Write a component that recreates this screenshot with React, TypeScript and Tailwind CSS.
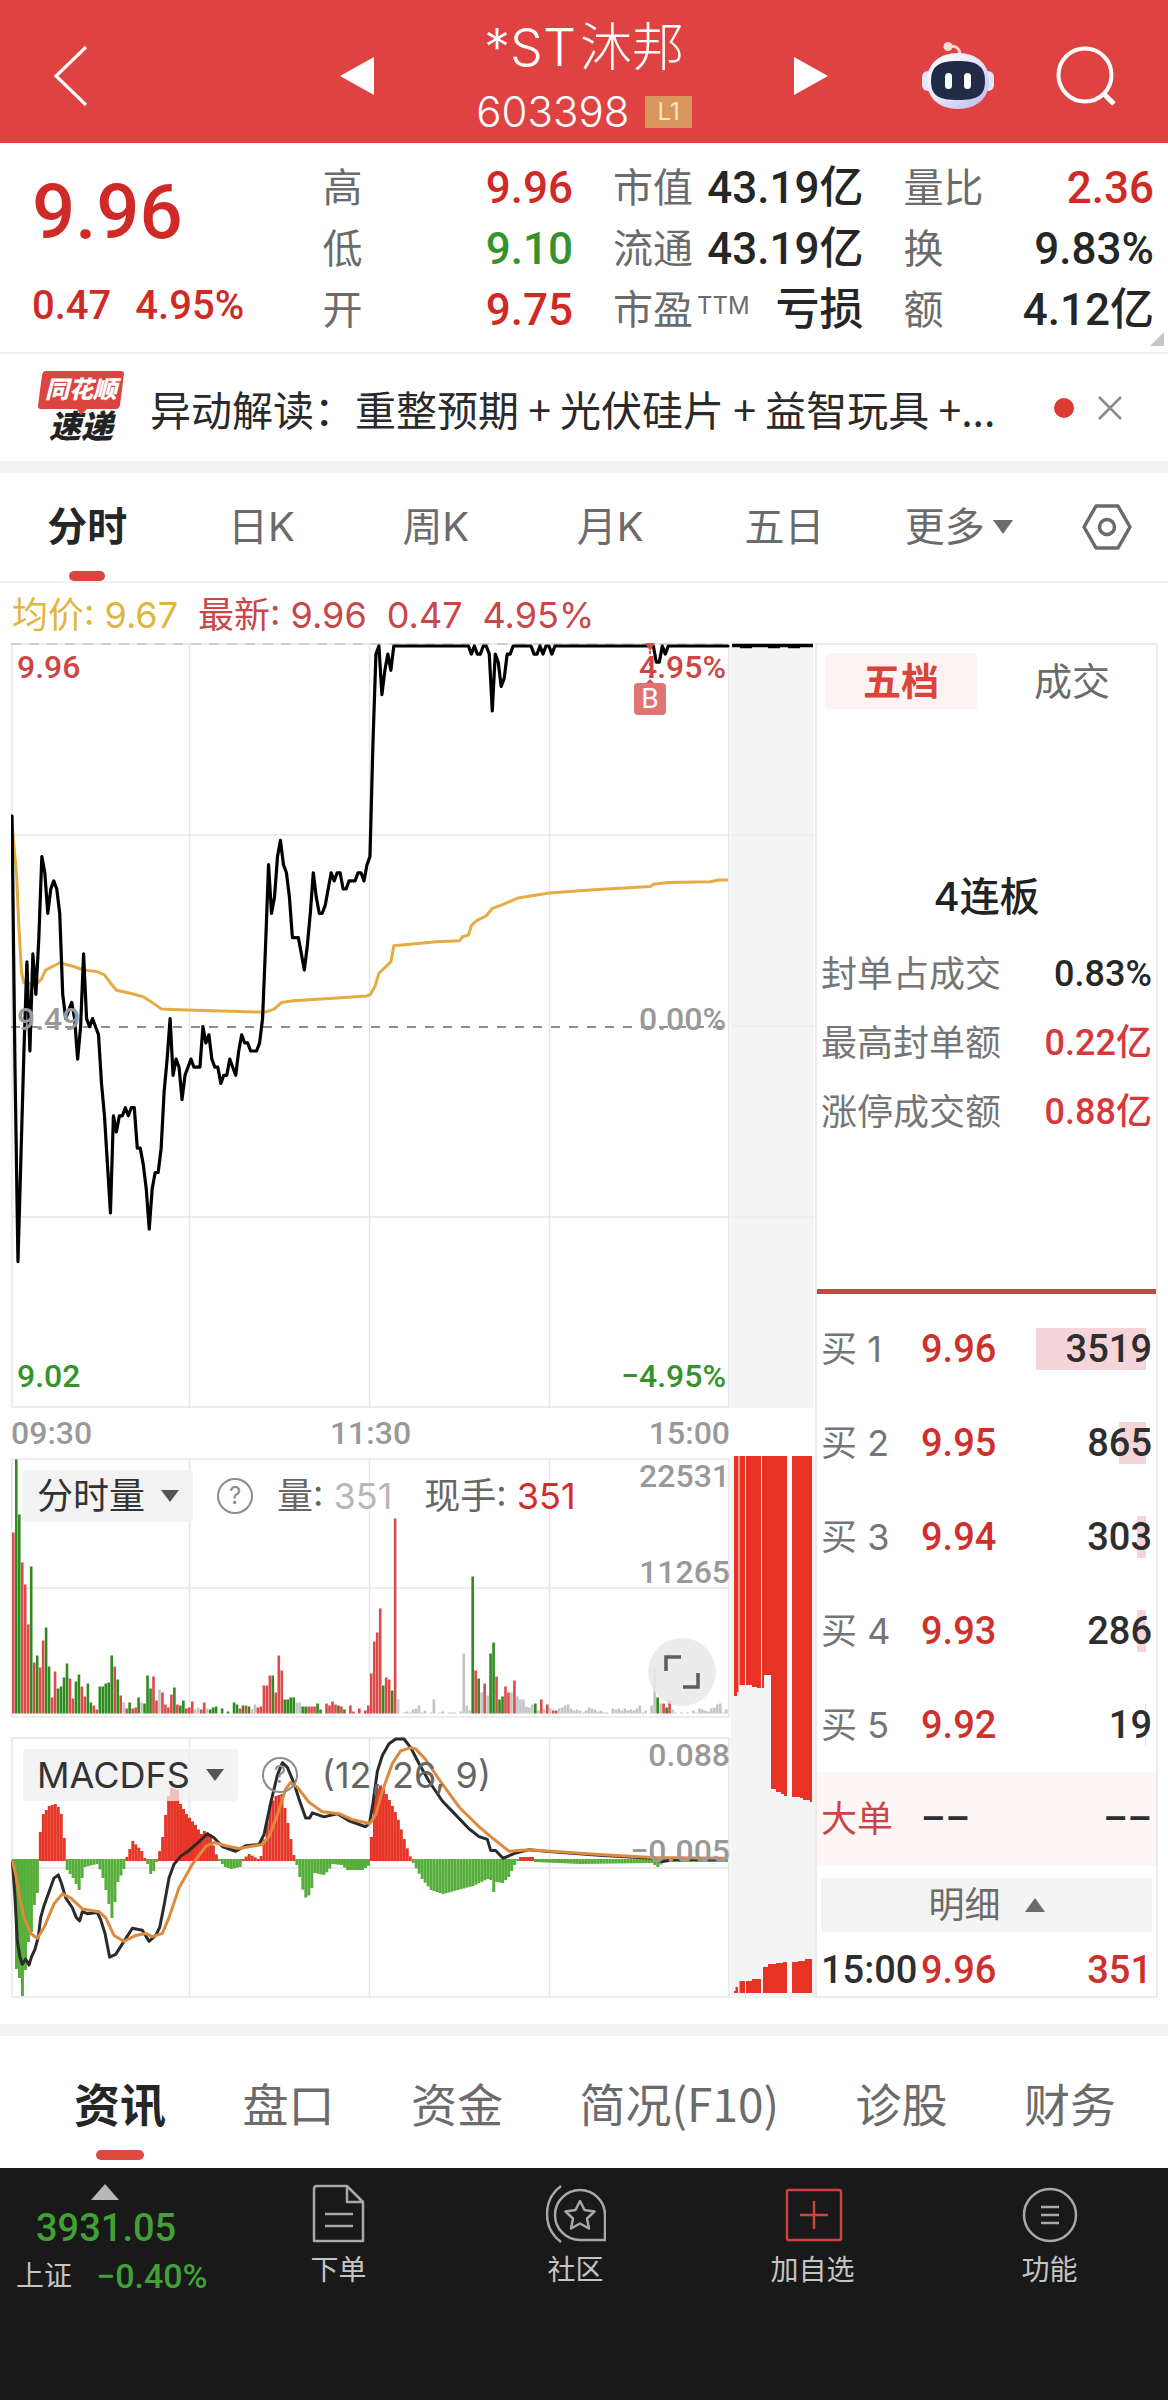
import type { ReactNode } from "react";

/* Mobile stock detail page: quote header, intraday chart with volume and MACD
   panes, order book on the right, and the dark trading bar at the bottom. */

const NUM = "font-[Roboto,'Noto_Sans_CJK_SC',sans-serif] font-medium";
const RED = "text-[#d02a26]";
const GREEN = "text-[#36922a]";
const INK = "text-[#262626]";

type Stat = { label: string; sup?: string; value: string; tone: string };

const STATS: Stat[][] = [
  [
    { label: "高", value: "9.96", tone: RED },
    { label: "低", value: "9.10", tone: GREEN },
    { label: "开", value: "9.75", tone: RED },
  ],
  [
    { label: "市值", value: "43.19亿", tone: INK },
    { label: "流通", value: "43.19亿", tone: INK },
    { label: "市盈", sup: "TTM", value: "亏损", tone: INK },
  ],
  [
    { label: "量比", value: "2.36", tone: RED },
    { label: "换", value: "9.83%", tone: INK },
    { label: "额", value: "4.12亿", tone: INK },
  ],
];

const PERIODS = ["分时", "日K", "周K", "月K", "五日"];
const SECTIONS = ["资讯", "盘口", "资金", "简况(F10)", "诊股", "财务"];

const BIDS = [
  { level: 1, price: "9.96", volume: 3519 },
  { level: 2, price: "9.95", volume: 865 },
  { level: 3, price: "9.94", volume: 303 },
  { level: 4, price: "9.93", volume: 286 },
  { level: 5, price: "9.92", volume: 19 },
];

const SEAL = [
  { label: "封单占成交", value: "0.83%", tone: "text-[#262626]" },
  { label: "最高封单额", value: "0.22亿", tone: "text-[#d8383c]" },
  { label: "涨停成交额", value: "0.88亿", tone: "text-[#d8383c]" },
];

/* ---- intraday data, one sample per minute (240 in a session) ---- */

const MINUTE = 2.983;

// Distance below the 9.96 limit price, in cents.
const PRICE = [
  21, 52, 76, 63, 50, 39, 50, 38, 43, 36, 26, 28, 33, 30, 29, 30, 33, 43, 46, 45, 44, 46, 51, 47, 38,
  46, 47, 46, 47, 48, 54, 58, 64, 70, 58, 60, 58, 58, 57, 58, 57, 57, 62, 62, 64, 67, 72, 67, 65, 65,
  62, 55, 51, 46, 53, 51, 52, 56, 53, 52, 51, 52, 52, 52, 47, 49, 48, 51, 52, 52, 54, 53, 53, 51, 52,
  53, 50, 48, 49, 49, 50, 50, 50, 49, 46, 37, 27, 33, 31, 26, 24, 27, 28, 31, 36, 36, 36, 38, 40, 37,
  33, 28, 31, 33, 33, 32, 30, 28, 29, 28, 28, 30, 30, 29, 29, 29, 28, 28, 29, 27, 26, 12, 1, 0, 6,
  3, 1, 3, 0, 0, 0, 0, 0, 0, 0, 0, 0, 0, 0, 0, 0, 0, 0, 0, 0, 0, 0, 0, 0, 0,
  0, 0, 0, 0, 1, 0, 1, 1, 0, 0, 1, 8, 1, 2, 5, 4, 1, 1, 0, 0, 0, 0, 0, 0, 0,
  1, 1, 0, 1, 0, 0, 1, 0, 0, 0, 0, 0, 0, 0, 0, 0, 0, 0, 0, 0, 0, 0, 0, 0, 0,
  0, 0, 0, 0, 0, 0, 0, 0, 0, 0, 0, 0, 0, 0, 0, 0, 2, 2, 0, 1, 0, 0, 0, 0, 0,
  0, 0, 0, 0, 0, 0, 0, 0, 0, 0, 0, 0, 0, 0, 0, 0,
];

// [minute, cents below the limit price]
const AVERAGE = [
  [0, 22], [1.5, 28], [2.3, 34.6], [3.2, 40.3], [4, 41.6], [7, 41.8], [9, 41.5], [10, 41], [11.3, 40],
  [14, 39.5], [16, 39.1], [20, 39.5], [24, 40], [28.5, 40.2], [31, 40.6], [33, 41.6], [35, 42.5],
  [40, 42.9], [44, 43.3], [47, 44], [50, 44.8], [56, 44.9], [83, 45.2], [85, 45.2], [88, 44.8],
  [90.4, 44], [94.3, 43.8], [107.7, 43.5], [119, 43.2], [120.2, 43], [121.7, 42], [123, 40.4],
  [127, 39], [128, 37], [142.3, 36.5], [150, 36.4], [151, 35.9], [153, 35.7], [154, 34.5],
  [155.8, 33.9], [159, 33.3], [161, 32.4], [164.7, 31.9], [169.7, 31.1], [180, 30.5], [195, 30.1],
  [214, 29.7], [215, 29.4], [220, 29.2], [234, 29.1], [237, 28.9], [240, 28.9],
];

// r = up, g = down, x = flat; the number is the bar height.
const VOLUME =
  "r181 g254 g199 r151 r129 r89 g147 r51 g58 r46 r73 g86 g47 r16 r42 g25 g27 g36 g50 r35 r15 g32 g39 r27 r17 " +
  "g30 g11 r8 r4 g27 g27 g30 g31 g58 r47 g34 r18 x11 r5 g11 r5 r6 g16 x11 g10 g38 g25 r37 r13 x24 " +
  "r21 r9 r6 r19 g26 r9 g8 g13 r5 r6 r12 x4 x6 r4 r11 x5 g4 g6 g7 x0 g5 x0 g2 x0 g11 " +
  "g9 r5 g8 r8 g7 x4 x9 r6 r7 r28 r28 r38 g38 r21 r58 r43 g14 g14 g16 g16 x11 x11 g7 g7 r7 " +
  "r7 r7 g10 g4 x0 r10 r8 r12 r9 g8 r7 g4 x0 r8 r2 x0 r5 x0 r3 r8 r40 r72 r81 r105 g28 " +
  "r36 r34 g23 r195 x14 x0 x1 x2 x1 x4 x5 x8 x1 x3 x0 x1 x14 x0 x1 x2 x0 x1 x1 x1 x0 " +
  "x2 x60 x8 x3 g137 r43 g35 x21 r30 x18 g60 g71 r37 g14 g17 r27 r21 x21 r33 x17 x14 x14 x7 x6 x9 " +
  "g10 x3 r14 x4 r9 x5 r3 r3 x5 x6 x8 x9 x5 x3 x4 x3 x1 x3 x6 x5 x4 x2 x3 x1 x1 " +
  "x0 x5 x4 x5 x3 x5 x3 x4 x3 x5 x8 x1 x3 x0 x8 x46 g16 x10 r10 g6 r13 x4 x1 x0 x1 " +
  "x0 x1 x0 x3 x1 x5 x4 x3 x2 x5 x6 x9 x10 x1 x4";

const VOLUME_FILL: Record<string, string> = { r: "#dc4a4a", g: "#2f8a1f", x: "#c4c4c4" };

// [minute, bar length]; bars between two entries are interpolated.
const HISTOGRAM = [
  [0, -4], [1, -109], [2, -118], [3, -136], [4, -110], [5, -82], [6, -72], [7, -45], [8, -33],
  [8.8, -10], [9, 28], [10, 46], [12, 54], [14, 56], [15, 53], [16, 46], [17, 22], [18, -10],
  [20, -18], [22, -30], [23, -18], [24, -7], [28, -4], [29.5, -12], [31, -30], [33, -58], [34, -42],
  [35, -22], [37, -9], [38, 3], [40, 19], [43, 9], [44, 2], [45, -4], [46, -14], [47, -11], [48, -2],
  [49, 9], [50, 23], [51, 45], [52, 64], [53, 72], [55, 70], [56, 56], [58, 46], [61, 35], [63, 26],
  [64, 29], [66, 26], [67.5, 9], [69, -1], [71, -7], [73, -9], [76, -7], [77, 1], [79, 6], [82, 1],
  [83, 4], [85, 37], [86, 55], [88, 64], [90, 66], [91.5, 45], [93, 21], [94, 5], [95, -5],
  [96, -17], [97.5, -36], [98.5, -39], [100, -28], [101, -13], [104, -15], [105.5, -11], [107, -4],
  [110, -5], [112, -10], [117, -10], [119.4, -5], [120, 23], [121, 64], [122.5, 76], [124, 72],
  [126, 60], [128.5, 45], [131, 21], [132.5, 7], [134, -3], [137, -19], [140, -30], [144, -34],
  [149, -30], [154, -26], [159, -19], [160, -20], [161, -32], [162, -22], [164, -23], [166, -17],
  [168, -5], [169, -1], [170, 3], [174, 3], [175, -2], [190, -4], [214, -3], [216, -7], [218, -2],
  [239, -2],
];

// Both MACD lines are stored on the recording grid and scaled by macdPoint.
const DIF = [
  [40, 1165], [48, 1260], [55, 1370], [63, 1410], [70, 1428], [80, 1415], [90, 1430], [98, 1408],
  [108, 1390], [118, 1358], [125, 1310], [135, 1280], [150, 1245], [165, 1210], [178, 1202],
  [188, 1225], [200, 1260], [220, 1285], [232, 1310], [242, 1318], [250, 1295], [265, 1300],
  [295, 1297], [305, 1315], [318, 1350], [332, 1410], [350, 1403], [375, 1370], [400, 1337],
  [430, 1342], [450, 1370], [470, 1355], [482, 1335], [495, 1280], [510, 1210], [525, 1175],
  [545, 1155], [570, 1140], [600, 1118], [625, 1098], [645, 1108], [670, 1130], [710, 1142],
  [740, 1128], [780, 1125], [795, 1100], [815, 1020], [835, 950], [850, 918], [865, 930], [885, 970],
  [900, 1010], [920, 1058], [932, 1058], [940, 1045], [975, 1055], [1015, 1047], [1050, 1065],
  [1100, 1080], [1112, 1070], [1122, 1020], [1135, 940], [1150, 900], [1170, 870], [1190, 858],
  [1215, 858], [1235, 880], [1260, 920], [1290, 965], [1330, 1015], [1370, 1050], [1410, 1085],
  [1440, 1105], [1465, 1112], [1475, 1140], [1490, 1140], [1512, 1160], [1545, 1148], [1590, 1138],
  [1650, 1143], [1800, 1152], [1960, 1160], [1990, 1168], [2030, 1163], [2180, 1162],
];

const DEA = [
  [40, 1165], [50, 1200], [60, 1250], [75, 1310], [95, 1350], [115, 1362], [135, 1335], [165, 1275],
  [190, 1250], [215, 1260], [250, 1288], [300, 1295], [320, 1310], [345, 1355], [375, 1370],
  [410, 1355], [440, 1350], [460, 1358], [490, 1350], [510, 1310], [540, 1235], [580, 1175],
  [620, 1130], [645, 1120], [680, 1128], [720, 1135], [790, 1125], [810, 1105], [835, 1050],
  [860, 985], [875, 968], [895, 980], [930, 1018], [970, 1042], [1020, 1047], [1060, 1062],
  [1112, 1072], [1130, 1050], [1150, 990], [1180, 920], [1205, 888], [1235, 880], [1250, 883],
  [1280, 910], [1320, 960], [1380, 1030], [1440, 1080], [1475, 1105], [1530, 1142], [1590, 1138],
  [1800, 1150], [1960, 1158], [2180, 1160],
];

const pricePoint = (m: number, cents: number) => `${1 + m * MINUTE},${3 + cents * 8.1}`;
const macdPoint = ([x, y]: number[]) => `${x / 3 - 12},${(y - 853) / 2.53}`;

function histogramAt(m: number) {
  const next = HISTOGRAM.findIndex(([x]) => x >= m);
  if (next <= 0) return HISTOGRAM[0][1];
  const [x0, v0] = HISTOGRAM[next - 1];
  const [x1, v1] = HISTOGRAM[next];
  return v0 + ((v1 - v0) * (m - x0)) / (x1 - x0);
}

function Triangle({ up, className }: { up?: boolean; className: string }) {
  return (
    <svg viewBox="0 0 20 12" preserveAspectRatio="none" className={className} fill="currentColor" aria-hidden>
      <path d={up ? "M10 0 20 12H0Z" : "M0 0H20L10 12Z"} />
    </svg>
  );
}

function HelpIcon() {
  return (
    <button type="button" aria-label="说明" className="flex size-9 items-center justify-center rounded-full border-2 border-[#8c8c8c] text-2xl leading-none text-[#8c8c8c]">
      ?
    </button>
  );
}

function Grid({ height, rows }: { height: number; rows: number[] }) {
  return (
    <g stroke="#e6e6e9" strokeWidth="1.5" fill="none">
      <path d={`M1 1H718V${height - 1}H1Z`} />
      <path d={`M178.500 0V${height}M358.500 0V${height}M538.500 0V${height}`} />
      {rows.map((y) => (
        <path key={y} d={`M0 ${y}H718`} />
      ))}
    </g>
  );
}

function Header() {
  return (
    <header className="grid grid-cols-[1fr_auto_1fr] items-center bg-[#de4341] pt-3 pb-1 text-white">
      <button type="button" aria-label="返回" className="w-fit pl-[54px]">
        <svg viewBox="0 0 34 60" className="h-[60px] w-[34px]" fill="none" stroke="currentColor" strokeWidth="3.200">
          <path d="M32 1 2 30 32 59" />
        </svg>
      </button>
      <div className="flex w-[488px] items-center justify-between">
        <button type="button" aria-label="上一只">
          <svg viewBox="0 0 34 38" className="h-[38px] w-[34px]" fill="currentColor"><path d="M34 0V38L0 19Z" /></svg>
        </button>
        <div className="flex flex-col items-center">
          <h1 className="flex gap-1 text-[52px] leading-[72px] font-light">
            <span>*ST</span>
            <span>沐邦</span>
          </h1>
          <p className="flex items-center gap-4 text-[42px] leading-[55px] font-light">
            603398
            <span className="bg-[#d9965a] px-3 text-2xl leading-8 font-normal text-[#fde6c4]">L1</span>
          </p>
        </div>
        <button type="button" aria-label="下一只">
          <svg viewBox="0 0 34 38" className="h-[38px] w-[34px]" fill="currentColor"><path d="M0 0V38L34 19Z" /></svg>
        </button>
      </div>
      <div className="flex items-center justify-end gap-[62px] pr-[52px]">
        <button type="button" aria-label="智能助手">
          <svg viewBox="0 0 72 68" className="h-[68px] w-[72px]">
            <defs>
              <linearGradient id="shell" x1="0" y1="0" x2="1" y2="1">
                <stop offset="0" stopColor="#fff" />
                <stop offset="0.550" stopColor="#e3e2fb" />
                <stop offset="1" stopColor="#b9b4f0" />
              </linearGradient>
            </defs>
            <path d="M27 5c6-2 11 1 11 8" fill="none" stroke="#fbd3d3" strokeWidth="3" />
            <circle cx="26" cy="4.500" r="4.500" fill="#fbdcdc" />
            <rect x="0" y="29" width="12" height="20" rx="6" fill="#e6e4fa" />
            <rect x="60" y="29" width="12" height="20" rx="6" fill="#e6e4fa" />
            <path d="M36 11C55 11 67 22 67 39S55 67 36 67 5 56 5 39 17 11 36 11Z" fill="url(#shell)" />
            <path d="M36 19c19 0 27 5 27 20S55 58 36 58 9 54 9 39s8-20 27-20Z" fill="#212b45" />
            <rect x="23" y="31" width="7" height="16" rx="3.500" fill="#fff" />
            <rect x="42" y="31" width="7" height="16" rx="3.500" fill="#fff" />
          </svg>
        </button>
        <button type="button" aria-label="搜索">
          <svg viewBox="0 0 60 60" className="size-[60px]" fill="none" stroke="currentColor" strokeWidth="4">
            <circle cx="29" cy="29" r="26.500" />
            <path d="M47 47 58 58" strokeWidth="5" />
          </svg>
        </button>
      </div>
    </header>
  );
}

function Quote() {
  return (
    <section className="relative grid grid-cols-4 gap-x-10 border-b-2 border-[#f0f0f0] pt-3.5 pr-3.5 pb-3 pl-8">
      <div className={`${NUM} ${RED} flex flex-col justify-between`}>
        <p className="text-[76px] leading-[110px]">9.96</p>
        <p className="flex gap-6 pb-1 text-[40px] leading-[60px]">
          <span>0.47</span>
          <span>4.95%</span>
        </p>
      </div>
      {STATS.map((column) => (
        <dl key={column[0].label}>
          {column.map((s) => (
            <div key={s.label} className="flex h-[61px] items-center justify-between whitespace-nowrap">
              <dt className="flex text-[40px] leading-[60px] text-[#6b6b6b]">
                {s.label}
                {s.sup && <sup className="top-0 pl-1 text-2xl leading-[52px]">{s.sup}</sup>}
              </dt>
              <dd className={`${NUM} ${s.tone} text-[44px] leading-[60px]`}>{s.value}</dd>
            </div>
          ))}
        </dl>
      ))}
      <svg viewBox="0 0 14 14" className="absolute right-1 bottom-1.5 size-3.5" fill="#c6c6c6" aria-hidden><path d="M14 0V14H0Z" /></svg>
    </section>
  );
}

function NewsBar() {
  return (
    <section className="flex h-[119px] items-center border-b-[12px] border-[#f3f3f3] pr-[46px] pl-9">
      <div className="flex w-[90px] flex-col items-center font-black italic">
        <span className="relative flex h-[38px] w-[86px] items-center justify-center">
          <svg viewBox="0 0 86 44" className="absolute top-0 left-0 h-11 w-[86px]" fill="#dc4440" aria-hidden>
            <path d="M8 0H83Q86 0 86 3L82 34Q81 38 78 38H49L43 44 39 38H3Q0 38 0 35L4 4Q5 0 8 0Z" />
          </svg>
          <span className="relative text-[24px] leading-8 text-white">同花顺</span>
        </span>
        <span className="text-[32px] leading-9 text-[#222]">速递</span>
      </div>
      <a href="#news" className="min-w-0 flex-1 overflow-hidden pl-6 font-['Noto_Sans_CJK_SC',sans-serif] text-[41px] leading-[60px] whitespace-nowrap text-[#2a2a2a]">
        异动解读：重整预期 + 光伏硅片 + 益智玩具 +...
      </a>
      <span className="size-5 rounded-full bg-[#dc3b35]" />
      <button type="button" aria-label="关闭" className="ml-6">
        <svg viewBox="0 0 24 24" className="size-6" fill="none" stroke="#8a8a8a" strokeWidth="2.500"><path d="M1 1 23 23M23 1 1 23" /></svg>
      </button>
    </section>
  );
}

function PeriodTabs() {
  return (
    <nav className="grid h-[110px] grid-cols-[repeat(6,10fr)_7fr] items-center border-b-2 border-[#f0f0f0] text-[40px] leading-[60px] text-[#6b6b6b]">
      {PERIODS.map((p, i) => (
        <button key={p} type="button" className={i === 0 ? "relative flex h-full items-center justify-center font-bold text-[#262626]" : "text-center"}>
          {p}
          {i === 0 && <span className="absolute bottom-0 h-2.5 w-9 rounded-full bg-[#dc4440]" />}
        </button>
      ))}
      <button type="button" className="flex items-center justify-center gap-2 whitespace-nowrap">
        更多
        <Triangle className="h-3.5 w-5" />
      </button>
      <button type="button" aria-label="设置" className="flex justify-center">
        <svg viewBox="0 0 50 46" className="h-[46px] w-[50px]" fill="none" stroke="currentColor" strokeWidth="3.500">
          <path d="M14 2H36L48 23 36 44H14L2 23Z" strokeLinejoin="round" />
          <circle cx="25" cy="23" r="7.500" />
        </svg>
      </button>
    </nav>
  );
}

function PriceChart() {
  return (
    <div className={`relative ${NUM} text-[32px] leading-8`}>
      <svg viewBox="0 0 719 765" className="block w-full" fill="none" role="img" aria-label="分时走势">
        <Grid height={765} rows={[192, 574]} />
        <path d="M0 1H718" stroke="#cfcfcf" strokeWidth="2" strokeDasharray="10 8" />
        <path d="M0 384H718" stroke="#8e8e8e" strokeWidth="1.800" strokeDasharray="9 9" />
        <polyline points={AVERAGE.map(([m, c]) => pricePoint(m, c)).join(" ")} stroke="#e6ab45" strokeWidth="3" strokeLinejoin="round" />
        <polyline points={PRICE.map((c, m) => pricePoint(m, c)).join(" ")} stroke="#000" strokeWidth="3.200" strokeLinejoin="round" strokeLinecap="round" />
        <path d="M639 2V40" stroke="#dc4a4a" strokeWidth="2" strokeDasharray="3 3" />
        <path d="M634 0H644L639 8ZM639 36 645 42H633Z" fill="#dc4a4a" />
      </svg>
      <span className="absolute top-2 left-1.5 text-[#cf4444]">9.96</span>
      <span className="absolute top-2 right-1 text-[#cf4444]">4.95%</span>
      <span className="absolute top-[47%] left-1.5 text-[#999]">9.49</span>
      <span className="absolute top-[47%] right-1 text-[#999]">0.00%</span>
      <span className="absolute bottom-4 left-1.5 text-[#36922a]">9.02</span>
      <span className="absolute right-1 bottom-4 text-[#36922a]">−4.95%</span>
      <span className="absolute top-10 right-16 flex h-8 w-8 items-center justify-center rounded-sm bg-[#e07474] text-[28px] font-normal text-white">B</span>
    </div>
  );
}

function VolumeChart() {
  return (
    <div className="relative">
      <svg viewBox="0 0 719 260" className="block w-full" role="img" aria-label="分时量">
        <Grid height={260} rows={[130]} />
        {VOLUME.split(" ").map((bar, m) => {
          const h = Number(bar.slice(1));
          return <rect key={m} x={1 + m * MINUTE} y={255.5 - h} width="2.600" height={h} fill={VOLUME_FILL[bar[0]]} />;
        })}
      </svg>
      <div className="absolute top-3 left-3 flex items-center text-[36px] leading-[52px] whitespace-nowrap text-[#666]">
        <button type="button" className="mr-6 flex items-center gap-4 rounded-sm bg-[#f1f1f1]/90 px-3.5 text-[#333]">
          分时量
          <Triangle className="h-3 w-[18px] text-[#555]" />
        </button>
        <HelpIcon />
        <span className="ml-6">量: <span className="text-[#b8b8b8]">351</span></span>
        <span className="ml-8">现手: <span className="text-[#d62b2b]">351</span></span>
      </div>
      <div className={`${NUM} pointer-events-none absolute top-0.5 right-0 flex flex-col items-end gap-16 text-[32px] leading-8 text-[#999]`}>
        <span>22531</span>
        <span>11265</span>
      </div>
      <button type="button" aria-label="全屏" className="absolute right-3.5 bottom-3 flex size-[68px] items-center justify-center rounded-full bg-[#e9e9e9]/85">
        <svg viewBox="0 0 36 36" className="size-9" fill="none" stroke="#5c5c5c" strokeWidth="3.500">
          <path d="M2 17V3H17M34 19V33H19" />
        </svg>
      </button>
    </div>
  );
}

function MacdChart() {
  const minutes = Array.from({ length: 240 }, (_, m) => m);
  return (
    <div className="relative">
      <svg viewBox="0 0 719 261" className="block w-full" fill="none" role="img" aria-label="MACD">
        <Grid height={261} rows={[131]} />
        {minutes.map((m) => {
          const v = histogramAt(m);
          return (
            <rect key={m} x={1 + m * MINUTE} y={v > 0 ? 123 - v : 122} width="3" height={Math.abs(v) + 1} fill={v > 0 ? "#e63628" : "#55ad3a"} />
          );
        })}
        <polyline points={DIF.map(macdPoint).join(" ")} stroke="#2b2b2b" strokeWidth="3" strokeLinejoin="round" />
        <polyline points={DEA.map(macdPoint).join(" ")} stroke="#dd8a3c" strokeWidth="3" strokeLinejoin="round" />
      </svg>
      <div className="absolute top-3 left-3 flex items-center text-[36px] leading-[52px] whitespace-nowrap text-[#666]">
        <button type="button" className="mr-6 flex items-center gap-4 rounded-sm bg-[#efefef]/75 px-3.5 text-[#333]">
          MACDFS
          <Triangle className="h-3 w-[18px] text-[#555]" />
        </button>
        <HelpIcon />
        <span className="ml-6">(12, 26, 9)</span>
      </div>
      <div className={`${NUM} pointer-events-none absolute top-0.5 right-0 flex flex-col items-end gap-16 text-[32px] leading-8 text-[#999]`}>
        <span>0.088</span>
        <span>−0.005</span>
      </div>
    </div>
  );
}

/* Opening auction strip: matched volume hangs from the top, unmatched volume
   rises from the bottom. */
function AuctionStrip() {
  return (
    <div className="flex flex-col">
      <svg viewBox="0 0 85 765" className="block w-full" aria-hidden>
        <rect x="1" y="0" width="83" height="765" fill="#f4f4f5" />
        <path d="M2 192H84M2 383H84M2 574H84" stroke="#ececee" strokeWidth="1.500" />
        <path d="M2 2.500H83" stroke="#000" strokeWidth="3.500" />
        <path d="M10 4.500H22M38 4.500H50M58 4.500H70" stroke="#000" strokeWidth="1.500" />
      </svg>
      <div className="h-12" />
      <svg viewBox="0 0 85 542" className="block w-full" aria-hidden>
        <rect x="1" y="0" width="83" height="542" fill="#f4f4f5" />
        <g fill="#e63323">
          <path d="M4 0H84V346H80V344H73V342H70V341H62V0H4ZM4 0V240H7V236H8.500V0Z" />
          <path d="M9.500 0V229H15V0ZM16 0V229H22V231H27V232H31V0ZM32 0V232H34V219H41V333H46V336H51V338H54V340H57V0Z" />
          <path d="M4 537V535H5.500V531H8V537ZM9.500 537V525H15V537ZM16 537V525H22V523H31V537ZM33 537V511H38V508H46V507H53V506H57V537ZM62 537V506H68V505H75V503H82V537Z" />
        </g>
        <rect x="57" y="0" width="5" height="341" fill="#fff" />
        <rect x="57" y="506" width="5" height="31" fill="#fff" />
        <rect x="82" y="0" width="3" height="542" fill="#f4f4f5" />
      </svg>
    </div>
  );
}

function OrderBook() {
  return (
    <aside className="flex flex-col border-2 border-[#ebebeb] bg-white">
      <div className="flex justify-between px-2 pt-2 text-[38px] leading-[56px]">
        <button type="button" className="w-[152px] rounded bg-[#fdf3f2] font-bold text-[#d9443c]">五档</button>
        <button type="button" className="w-[152px] text-[#6b6b6b]">成交</button>
      </div>
      <h2 className="pt-[156px] text-center text-[40px] leading-[64px] font-medium text-[#222]">4连板</h2>
      <dl className="pt-2.5 pr-1 pl-1">
        {SEAL.map((s) => (
          <div key={s.label} className="flex h-[69px] items-center justify-between whitespace-nowrap">
            <dt className="text-[36px] leading-[60px] text-[#757575]">{s.label}</dt>
            <dd className={`${NUM} ${s.tone} text-[36px] leading-[60px]`}>{s.value}</dd>
          </div>
        ))}
      </dl>
      <div className="mt-[143px] h-[5px] bg-[#c24845]" />
      <table className="mt-2 w-full text-[38px] leading-[60px]">
        <tbody>
          {BIDS.map((b) => (
            <tr key={b.level} className="h-[94px]">
              <th scope="row" className="w-[104px] pl-1 text-left text-[36px] font-normal whitespace-nowrap text-[#757575]">买 {b.level}</th>
              <td className={`${NUM} text-[#cf302c]`}>{b.price}</td>
              <td className={`${NUM} relative pr-1 text-right text-[#2e2e2e]`}>
                <span className="absolute top-1/2 right-2.5 h-[42px] -translate-y-1/2 bg-[#f5d5d9]" style={{ width: Math.max(1, Math.round(b.volume / 32)) }} />
                <span className="relative">{b.volume}</span>
              </td>
            </tr>
          ))}
          <tr className="h-[94px] bg-[#fdf6f7]">
            <th scope="row" className="pl-1 text-left text-[36px] font-normal text-[#c94545]">大单</th>
            <td className={`${NUM} text-[#2e2e2e]`}>––</td>
            <td className={`${NUM} pr-1 text-right text-[#2e2e2e]`}>––</td>
          </tr>
        </tbody>
      </table>
      <button type="button" className="mx-1 mt-3 flex items-center justify-center gap-6 bg-[#f4f4f4] text-[36px] leading-[54px] text-[#6b6b6b]">
        明细
        <Triangle up className="h-3.5 w-5" />
      </button>
      <p className={`${NUM} flex flex-1 items-end pr-1 pl-1 text-[38px] leading-[52px] text-[#cf302c]`}>
        <span className="w-[100px] text-[#2e2e2e]">15:00</span>
        <span>9.96</span>
        <span className="ml-auto">351</span>
      </p>
    </aside>
  );
}

function BarItem({ label, className, children }: { label: string; className?: string; children: ReactNode }) {
  return (
    <a href="#" className="flex flex-1 flex-col items-center gap-2 pt-4">
      <svg viewBox="0 0 60 60" className={`size-[60px] ${className ?? "text-[#a9a9a9]"}`} fill="none" stroke="currentColor" strokeWidth="2.500">
        {children}
      </svg>
      <span className="text-[28px] leading-9">{label}</span>
    </a>
  );
}

function BottomBar() {
  return (
    <footer className="flex flex-1 items-start bg-[#191919] text-[#c4c4c4]">
      <a href="#index" className="flex w-[220px] flex-col pt-4 pl-4">
        <Triangle up className="ml-[75px] h-4 w-7 text-[#b8b8b8]" />
        <span className={`${NUM} pl-5 text-[38px] leading-[56px] text-[#42a036]`}>3931.05</span>
        <span className="flex items-center gap-6 leading-10">
          <span className="text-[28px]">上证</span>
          <span className={`${NUM} text-[34px] text-[#42a036]`}>−0.40%</span>
        </span>
      </a>
      <BarItem label="下单">
        <path d="M8 2H38L54 18V57H5V5Q5 2 8 2ZM38 2V18H54M16 30H44M16 42H44" strokeLinejoin="round" />
      </BarItem>
      <BarItem label="社区">
        <path d="M15 2A35 35 0 0 0 15 58" />
        <path d="M34 6A25 25 0 1 0 34 56H59V31A25 25 0 0 0 34 6Z" />
        <path d="M34 17 38.500 26 48.500 27.500 41 34.500 43 44.500 34 39.500 25 44.500 27 34.500 19.500 27.500 29.500 26Z" strokeLinejoin="round" />
      </BarItem>
      <BarItem label="加自选" className="text-[#cf4240]">
        <rect x="4" y="6" width="54" height="50" rx="2" />
        <path d="M31 17V45M17 31H45" />
      </BarItem>
      <BarItem label="功能">
        <circle cx="30" cy="31" r="26" />
        <path d="M21 23H39M21 31H39M21 39H39" />
      </BarItem>
    </footer>
  );
}

export default function App() {
  return (
    <div className="flex min-h-screen flex-col bg-white font-[Inter,'Noto_Sans_CJK_SC',sans-serif]">
      <Header />
      <Quote />
      <NewsBar />
      <PeriodTabs />
      <main>
        <p className="flex gap-5 pt-1 pl-3 text-[36px] leading-[56px] whitespace-nowrap text-[#c8474a]">
          <span className="text-[#dfb73e]">均价: 9.67</span>
          <span>最新: 9.96</span>
          <span>0.47</span>
          <span>4.95%</span>
        </p>
        <div className="grid grid-cols-[719fr_85fr_343fr] pr-2.5 pl-[11px]">
          <div>
            <PriceChart />
            <div className={`${NUM} flex justify-between text-[32px] leading-[50px] text-[#999]`}>
              <span>09:30</span>
              <span>11:30</span>
              <span>15:00</span>
            </div>
            <VolumeChart />
            <div className="h-[19px]" />
            <MacdChart />
          </div>
          <AuctionStrip />
          <OrderBook />
        </div>
      </main>
      <nav className="mt-[26px] flex justify-between border-t-[12px] border-[#f3f3f3] pr-[52px] pl-[74px] font-['Noto_Sans_CJK_SC',sans-serif] text-[46px] leading-[132px] whitespace-nowrap text-[#6b6b6b]">
        {SECTIONS.map((s, i) => (
          <a key={s} href="#" className={i === 0 ? "relative font-bold text-[#262626]" : ""}>
            {s}
            {i === 0 && <span className="absolute bottom-2 left-1/2 h-2.5 w-12 -translate-x-1/2 rounded-full bg-[#dc4a42]" />}
          </a>
        ))}
      </nav>
      <BottomBar />
    </div>
  );
}
